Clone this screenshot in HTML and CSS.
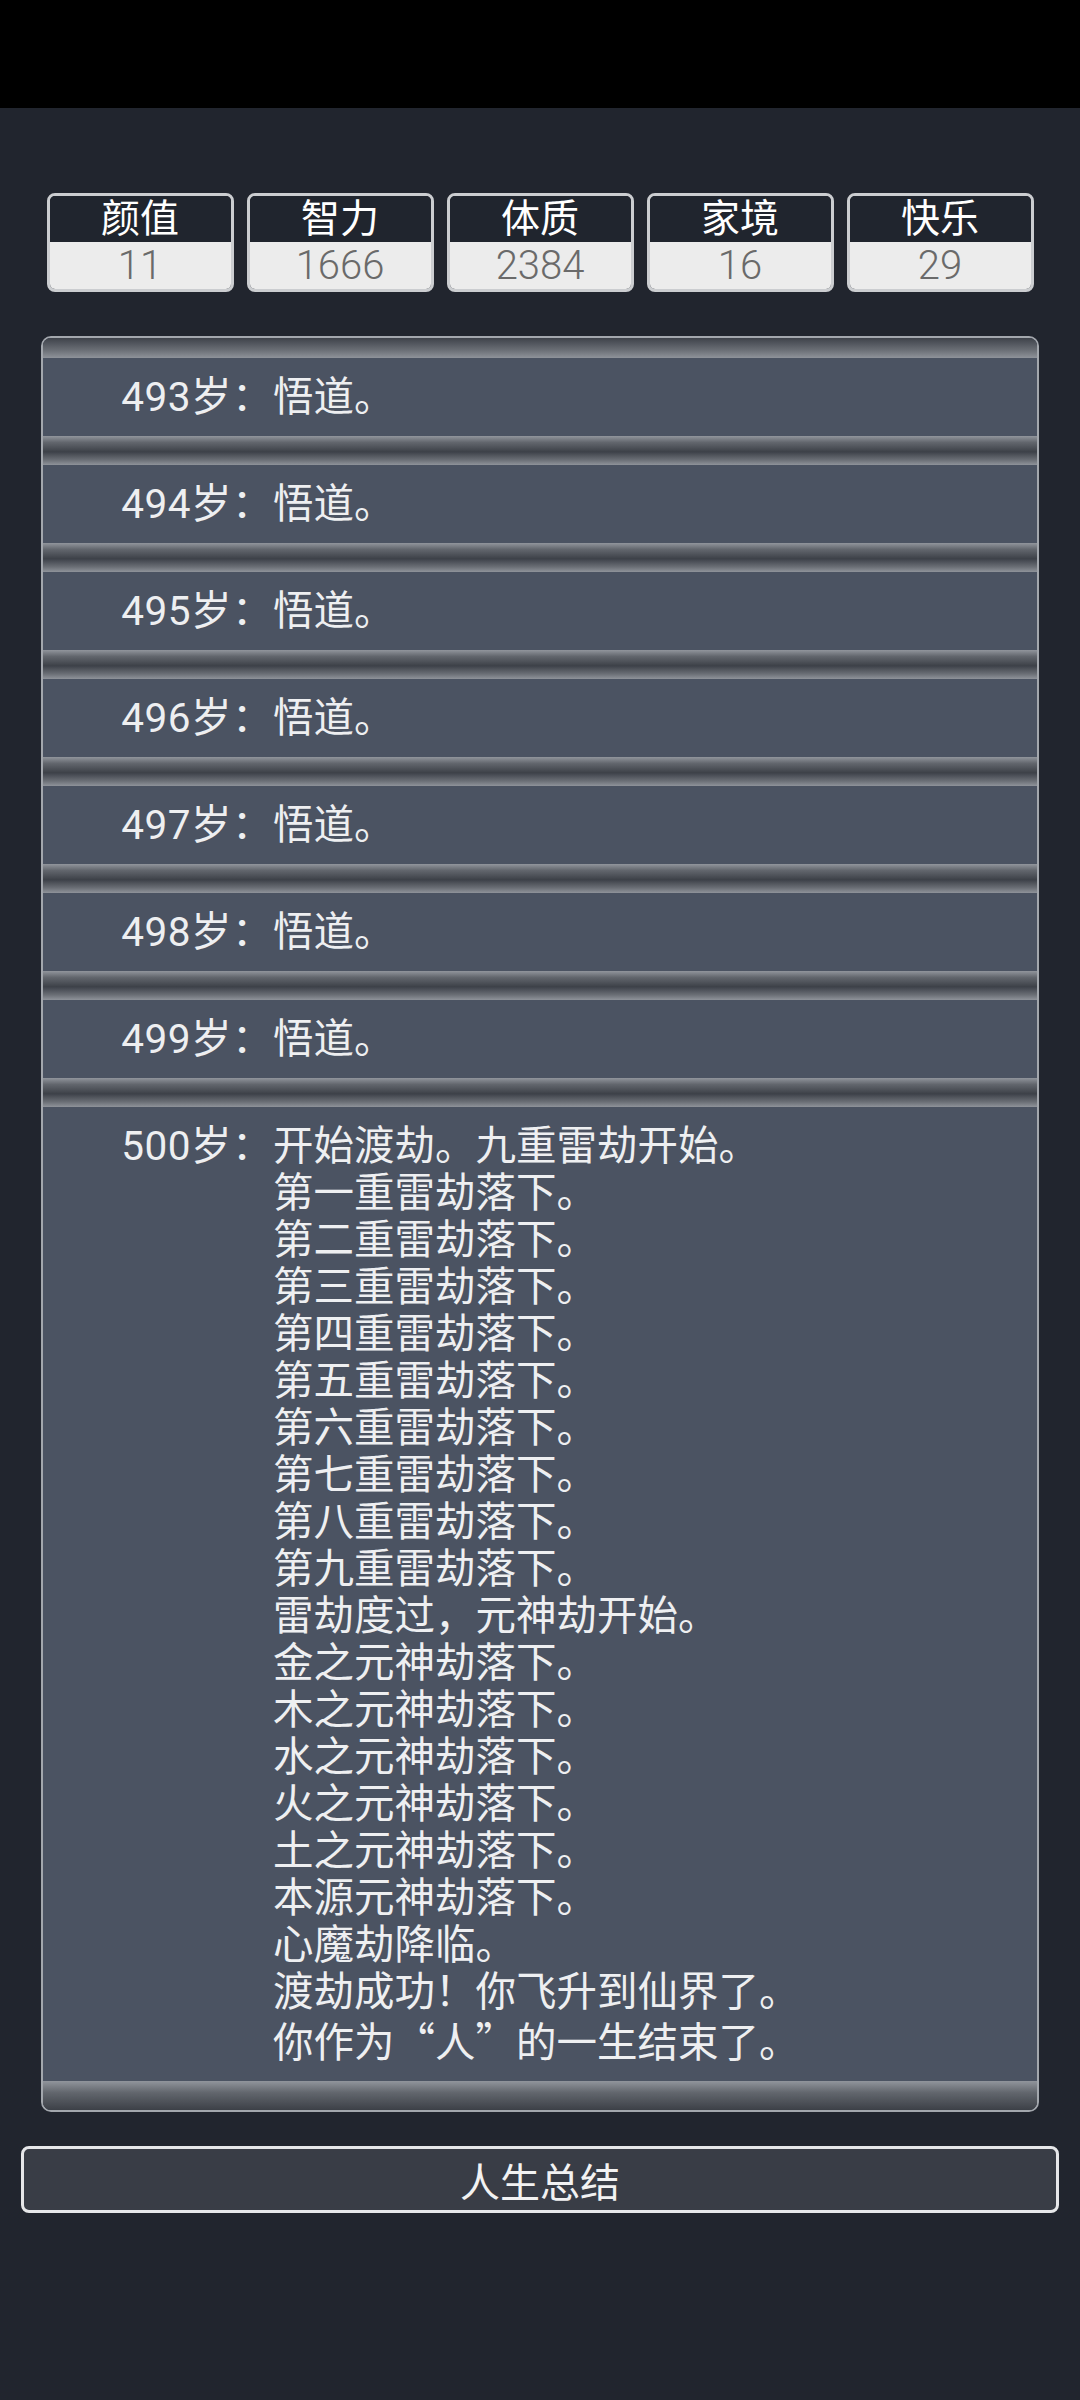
FILE: index.html
```html
<!DOCTYPE html>
<html lang="zh-CN">
<head>
    <meta charset="UTF-8">
    <meta name="viewport" content="width=device-width, initial-scale=1.0">
    <title>人生重开模拟器</title>
    <link rel="stylesheet" href="styles.css">
</head>
<body>
    <div class="status-bar"></div>

    <div class="stats">
        <div class="stat"><div class="stat-name">颜值</div><div class="stat-value">11</div></div>
        <div class="stat"><div class="stat-name">智力</div><div class="stat-value">1666</div></div>
        <div class="stat"><div class="stat-name">体质</div><div class="stat-value">2384</div></div>
        <div class="stat"><div class="stat-name">家境</div><div class="stat-value">16</div></div>
        <div class="stat"><div class="stat-name">快乐</div><div class="stat-value">29</div></div>
    </div>

    <ul class="trajectory">
        <li><span class="age">493岁：</span><span class="event">悟道。</span></li>
        <li><span class="age">494岁：</span><span class="event">悟道。</span></li>
        <li><span class="age">495岁：</span><span class="event">悟道。</span></li>
        <li><span class="age">496岁：</span><span class="event">悟道。</span></li>
        <li><span class="age">497岁：</span><span class="event">悟道。</span></li>
        <li><span class="age">498岁：</span><span class="event">悟道。</span></li>
        <li><span class="age">499岁：</span><span class="event">悟道。</span></li>
        <li>
            <span class="age">500岁：</span>
            <span class="event">开始渡劫。九重雷劫开始。<br>
                第一重雷劫落下。<br>
                第二重雷劫落下。<br>
                第三重雷劫落下。<br>
                第四重雷劫落下。<br>
                第五重雷劫落下。<br>
                第六重雷劫落下。<br>
                第七重雷劫落下。<br>
                第八重雷劫落下。<br>
                第九重雷劫落下。<br>
                雷劫度过，元神劫开始。<br>
                金之元神劫落下。<br>
                木之元神劫落下。<br>
                水之元神劫落下。<br>
                火之元神劫落下。<br>
                土之元神劫落下。<br>
                本源元神劫落下。<br>
                心魔劫降临。<br>
                渡劫成功！你飞升到仙界了。<br>
                <span class="cjk">你作为“人”的一生结束了。</span></span>
        </li>
    </ul>

    <button class="summary">人生总结</button>
</body>
</html>
```

FILE: styles.css
```css
body {
    margin: 0;
    background: #21252e;
    color: #eeeff1;
    font-family: Roboto, "Noto Sans CJK SC", sans-serif;
}

.cjk {
    font-family: "Noto Sans CJK SC", sans-serif;
}

.status-bar {
    height: 108px;
    background: #000;
}

/* attribute boxes */
.stats {
    display: grid;
    grid-template-columns: repeat(5, 187px);
    column-gap: 13px;
    justify-content: center;
    margin-top: 85px;
}

.stat {
    border: 3px solid #cbcdd0;
    border-radius: 8px;
    overflow: hidden;
    text-align: center;
}

.stat-name {
    height: 46px;
    line-height: 46px;
    background: #20252e;
    color: #fff;
    font-size: 39px;
}

.stat-value {
    height: 47px;
    line-height: 47px;
    background: #ececec;
    color: #6a6a6a;
    font-size: 40px;
    font-weight: 300;
}

/* life trajectory list */
.trajectory {
    list-style: none;
    margin: 44px 41px 0;
    padding: 0;
    border: 2px solid #a3a7ad;
    border-radius: 10px;
    overflow: hidden;
}

.trajectory li {
    --top: 13px;
    --bottom: 16px;
    display: flex;
    padding: 29px 0 31px;
    font-size: 40.5px;
    line-height: 47px;
    background:
        linear-gradient(to bottom, #3e424a, #6a6e75 60%, #8f939a) top / 100% var(--top) no-repeat,
        linear-gradient(to bottom, #91959c, #62666d 40%, #3c4047) bottom / 100% var(--bottom) no-repeat,
        #4b5362;
}

.trajectory li:first-child {
    --top: 20px;
    padding-top: 36px;
}

.trajectory li:last-child {
    --bottom: 29px;
    padding-bottom: 43px;
}

.age {
    flex: none;
    width: 230px;
    text-align: right;
    letter-spacing: 0.5px;
}

.event {
    flex: 1;
}

.summary {
    display: block;
    width: calc(100% - 42px);
    height: 67px;
    margin: 34px 21px 0;
    padding: 0;
    background: #393d46;
    color: #f2f2f2;
    border: 3px solid #e6e7e9;
    border-radius: 8px;
    font-family: "Noto Sans CJK SC", sans-serif;
    font-size: 40px;
}
```
